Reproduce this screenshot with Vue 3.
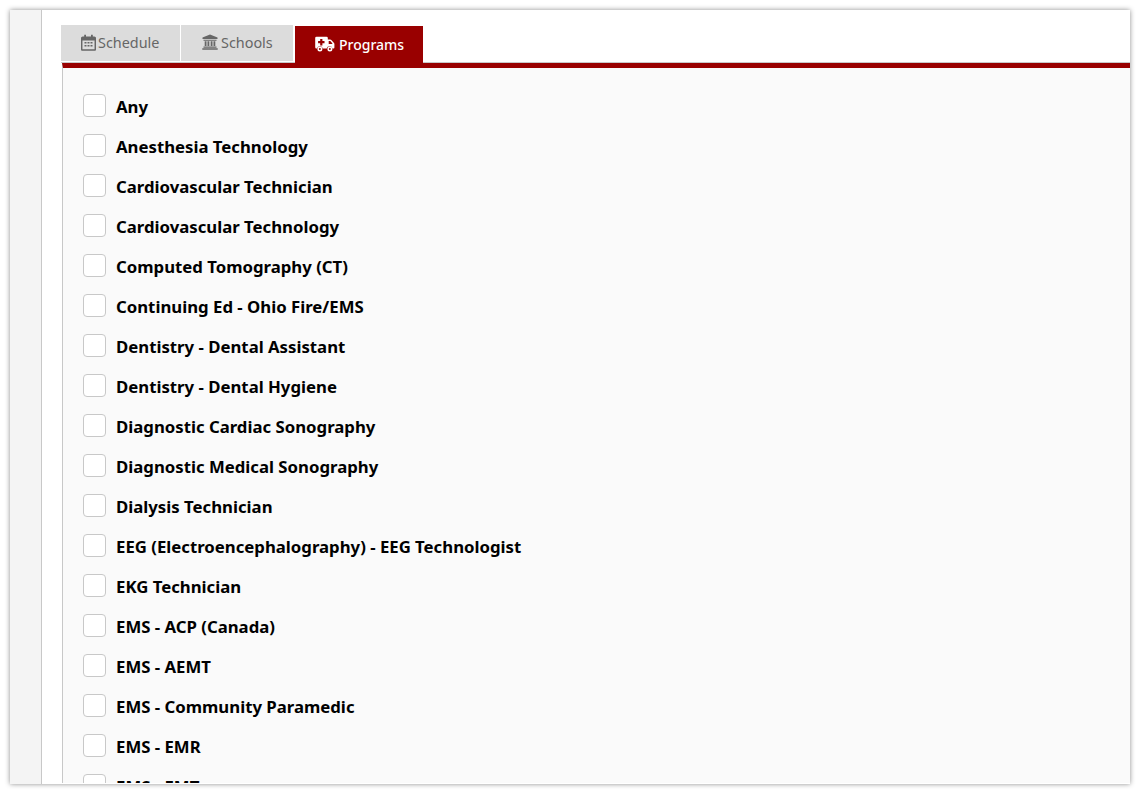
<script setup>
const programs = [
  'Any',
  'Anesthesia Technology',
  'Cardiovascular Technician',
  'Cardiovascular Technology',
  'Computed Tomography (CT)',
  'Continuing Ed - Ohio Fire/EMS',
  'Dentistry - Dental Assistant',
  'Dentistry - Dental Hygiene',
  'Diagnostic Cardiac Sonography',
  'Diagnostic Medical Sonography',
  'Dialysis Technician',
  'EEG (Electroencephalography) - EEG Technologist',
  'EKG Technician',
  'EMS - ACP (Canada)',
  'EMS - AEMT',
  'EMS - Community Paramedic',
  'EMS - EMR',
  'EMS - EMT'
]
</script>

<template>
  <div class="page">
    <div class="window">
      <aside class="rail"></aside>
      <main class="main">
        <nav class="tabs">
          <a class="tab tab-schedule">
            <svg class="ico" width="15" height="17" viewBox="0 0 15 17">
              <path fill="none" stroke="currentColor" stroke-width="1.5" d="M1.700 3.200h11.600a1 1 0 0 1 1 1v10.900a1 1 0 0 1-1 1H1.700a1 1 0 0 1-1-1V4.200a1 1 0 0 1 1-1z"/>
              <path fill="currentColor" d="M1 3h13v3.500H1zM3.200 .8h1.800v3H3.200zM10 .8h1.800v3H10z"/>
              <path fill="currentColor" d="M3.500 8h2v1.500h-2zM6.500 8h2v1.500h-2zM9.500 8h2v1.500h-2zM3.500 11h2v1.500h-2zM6.500 11h2v1.500h-2zM9.500 11h2v1.500h-2z"/>
            </svg>
            <span>Schedule</span>
          </a>
          <a class="tab tab-schools">
            <svg class="ico" width="16" height="16" viewBox="0 0 16 16">
              <path fill="currentColor" d="M8 .5 15.500 3.500V5H.5V3.500zM1.500 5.700h13v1.100h-13zM2.700 7.300h1.800v4.700H2.700zM5.500 7.300h1.800v4.700H5.500zM8.700 7.300h1.800v4.700H8.700zM11.500 7.300h1.800v4.700h-1.800zM1.500 12.500h13v1.300h-13zM.3 14.300h15.400v1.400H.3z"/>
            </svg>
            <span>Schools</span>
          </a>
          <a class="tab tab-programs">
            <svg class="ico" width="20" height="16" viewBox="0 0 20 16">
              <path fill="currentColor" d="M1.500 .8h10a1.300 1.300 0 0 1 1.300 1.300V3.500h2.400a1.500 1.500 0 0 1 1.100.5l2.700 3a1.500 1.500 0 0 1 .4 1V11.500a1 1 0 0 1-1 1h-.9a3 3 0 0 0-5.800 0H7.800a3 3 0 0 0-5.800 0h-.5a1.300 1.300 0 0 1-1.300-1.300V2.100A1.300 1.300 0 0 1 1.500 .8z"/>
              <path fill="#990000" d="M5.200 3h2.200v2.100h2.100v2.200H7.400v2.100H5.200V7.300H3.100V5.100h2.100zM13.700 5h1.600l2 2.300v.6h-3.600z"/>
              <circle cx="4.900" cy="13" r="2.500" fill="currentColor"/>
              <circle cx="4.900" cy="13" r="1" fill="#990000"/>
              <circle cx="14.900" cy="13" r="2.500" fill="currentColor"/>
              <circle cx="14.900" cy="13" r="1" fill="#990000"/>
            </svg>
            <span>Programs</span>
          </a>
        </nav>
        <section class="panel">
          <label v-for="p in programs" :key="p" class="row">
            <span class="box"></span>
            <span class="label">{{ p }}</span>
          </label>
        </section>
      </main>
    </div>
  </div>
</template>

<style>
html, body { margin: 0; background: #fff; overflow: hidden; }
</style>

<style scoped>
.page {
  height: 794px;
  box-sizing: border-box;
  padding: 10px;
  font-family: "Noto Sans", "Open Sans", sans-serif;
}
.window {
  display: flex;
  height: 774px;
  background: #fff;
  overflow: hidden;
  box-shadow: 0 0 5px rgba(0, 0, 0, 0.45);
}
.rail {
  width: 31px;
  flex: none;
  background: #f4f4f4;
  border-right: 1px solid #c8c8c8;
}
.main {
  flex: 1;
  min-width: 0;
  padding: 15px 0 0 19px;
}
.tabs {
  display: flex;
  height: 38px;
  box-sizing: border-box;
  border-bottom: 1px solid #c8c8c8;
}
.tab {
  display: flex;
  align-items: center;
  box-sizing: border-box;
  height: 37px;
  padding-bottom: 2px;
  background: #dcdcdc;
  color: #666;
  font-size: 14.4px;
  border-right: 1px solid #fff;
  border-bottom: 1px solid #fff;
}
.ico { flex: none; }
.tab-schedule { width: 120px; padding-left: 20px; gap: 2px; }
.tab-schools { width: 114px; padding-left: 21px; gap: 3px; border-right: 2px solid #fff; }
.tab-programs {
  width: 128px;
  height: 38px;
  padding-left: 20px;
  gap: 4px;
  background: #990000;
  color: #fff;
  font-size: 14px;
  font-weight: 500;
  border: 0;
  margin-top: 1px;
}
.panel {
  margin-left: 1px;
  border-left: 1px solid #c8c8c8;
  border-top: 5px solid #990000;
  background: #fafafa;
  padding: 19px 0 0 20px;
  height: 720px;
  box-sizing: border-box;
  overflow: hidden;
}
.row {
  display: flex;
  align-items: center;
  height: 40px;
  gap: 10px;
}
.box {
  width: 21px;
  height: 21px;
  flex: none;
  margin-bottom: 3px;
  background: #fff;
  border: 1px solid #c8c8c8;
  border-radius: 4px;
}
.label {
  font-size: 16.75px;
  font-weight: 700;
  color: #000;
  white-space: nowrap;
  margin-bottom: 2px;
}
</style>
